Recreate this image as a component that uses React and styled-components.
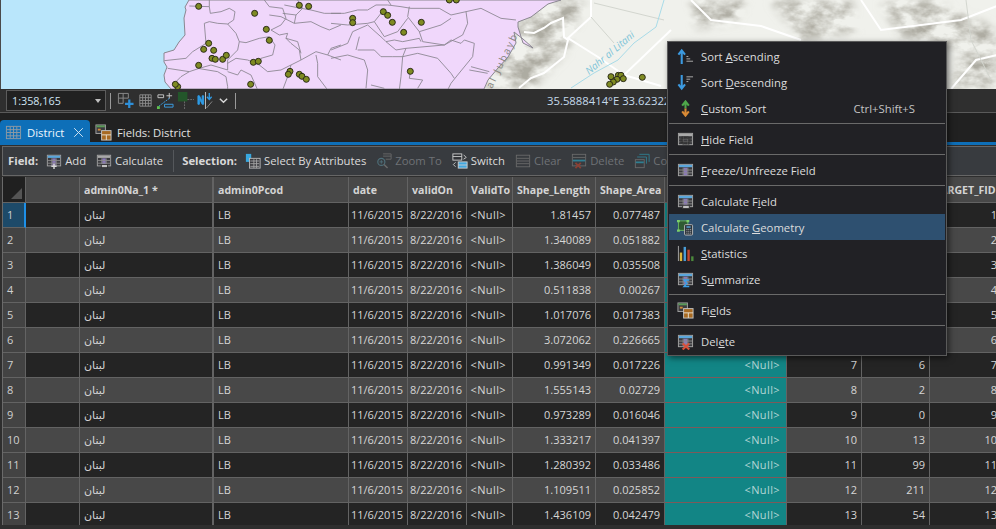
import styled, { createGlobalStyle } from "styled-components";

const FONT = `"Open Sans", "DejaVu Sans", sans-serif`;
const NULL_TEXT = "<Null>";

const GlobalStyle = createGlobalStyle`
  html, body {
    margin: 0;
    padding: 0;
    background: #2e2e2e;
    overflow: hidden;
  }
  * { box-sizing: border-box; }
`;

const COLUMNS = "23px 54px 134px 135px 59px 59px 46px 83px 69px 122px 75px 68px 72px";
const HEADERS = ["", "", "admin0Na_1 *", "admin0Pcod", "date", "validOn", "ValidTo", "Shape_Length", "Shape_Area", "", "", "", "TARGET_FID"];
const LENGTHS = ["1.81457", "1.340089", "1.386049", "0.511838", "1.017076", "3.072062", "0.991349", "1.555143", "0.973289", "1.333217", "1.280392", "1.109511", "1.436109"];
const AREAS = ["0.077487", "0.051882", "0.035508", "0.00267", "0.017383", "0.226665", "0.017226", "0.02729", "0.016046", "0.041397", "0.033486", "0.025852", "0.042479"];
const COUNTS = ["", "", "", "", "", "", "6", "2", "0", "13", "99", "211", "54"];

/* map drawing, coords are those of the 3x crops */
const WEST_LINES = [
  "M205 18L265 20 268 40 300 35 325 25 342 35 338 60 320 72 290 70 265 65 250 70 255 130 215 155 195 175 130 182",
  "M265 0L265 20",
  "M320 72L345 100 355 125 350 150 320 180 320 210 270 195 235 205 205 215 140 205",
  "M355 125L375 128 415 115 445 110 462 135 455 165 420 175 415 195 380 180 345 175 320 190",
  "M205 215L180 230 165 245",
  "M230 205L290 215 315 230 320 260 320 276",
  "M320 215L350 225 360 210 390 225 410 270",
  "M415 195L440 215 480 210 510 195 540 180 585 155 620 165 660 180",
  "M540 180L535 150 510 130 495 115 500 100 475 105 450 90 480 75 495 55 485 25 445 20 430 0",
  "M445 45L480 50 520 70 525 45 485 40",
  "M520 70L570 65 600 80 625 90 660 75",
  "M495 115L530 125 540 160",
  "M510 195L500 230 485 270",
  "M585 165L590 190 590 230 620 270",
  "M490 15L540 25 570 30 610 40 660 40",
  "M530 0L545 25 525 45",
  "M620 165L630 145 660 135",
];
const EAST_LINES = [
  "M0 40L40 40 80 30 110 30 135 15 170 15 210 20 240 25 325 25 360 45 405 35 450 25 510 55 555 60",
  "M170 0L180 15",
  "M235 20L230 50 265 95 330 75 360 55",
  "M130 65L160 110 200 95 230 55",
  "M0 70L50 75 110 70 130 65 150 40",
  "M0 150L50 130 65 95 110 75",
  "M110 75L155 115 165 125 190 120 215 125 265 115 270 125",
  "M265 95L275 125 340 135 395 105 410 70 405 35",
  "M165 125L195 150 225 145 340 135 360 120 390 130 400 120 430 130 425 170 380 225",
  "M225 145L215 170 210 230 205 270",
  "M215 170L260 160 320 175 360 220 370 235",
  "M80 150L130 150 150 170 185 170 215 170",
  "M0 175L50 165 100 180 110 210 105 265",
  "M85 110L75 150",
  "M420 200L475 215M415 210L470 220",
  "M380 225L360 250 350 270",
  "M238 215L235 235 275 240 260 265",
  "M120 255L160 265",
];
const WEST_POINTS = [[233,19],[401,40],[436,88],[445,121],[263,130],[248,148],[278,151],[273,175],[283,178],[305,178],[316,166],[233,196],[397,187],[412,184],[507,214],[502,223],[535,223],[543,229],[556,238],[170,260],[163,253],[389,253],[535,16],[563,19]];
const EAST_POINTS = [[65,55],[65,68],[157,35],[170,46],[184,67],[218,97],[271,67],[238,214],[355,0],[376,0],[934,232],[840,230],[862,226],[870,226],[877,236],[858,238],[847,246],[836,253]];

const MapDrawing = () => (
  <MapSvg viewBox="0 0 996 89" width="996" height="89">
    <defs>
      <filter id="relief" x="-10%" y="-30%" width="120%" height="160%">
        <feGaussianBlur in="SourceAlpha" stdDeviation="5" result="shape" />
        <feTurbulence type="fractalNoise" baseFrequency="0.045 0.07" numOctaves="4" seed="7" />
        <feColorMatrix values="0 0 0 0 0.42  0 0 0 0 0.41  0 0 0 0 0.36  2.6 0 0 0 -0.85" result="noise" />
        <feComposite in="noise" in2="shape" operator="in" />
      </filter>
    </defs>
    <rect width="996" height="89" fill="#f0f1ec" />
    <rect width="300" height="89" fill="#b9e6fb" />
    <g filter="url(#relief)" fill="#000">
      <path d="M530 0L585 0 572 30 566 50 530 89 480 89 510 40Z" />
      <path d="M690 0L745 0 735 22 695 28Z" />
      <path d="M770 0L850 0 855 30 800 40Z" />
      <path d="M880 4L930 0 996 30 996 89 950 89 960 50 900 36Z" />
    </g>
    <g fill="none" stroke="#fff" strokeWidth="2">
      <path d="M523 32L533 33 543 28 550 23 562 18 563 37 567 40 563 57 543 73 530 78 518 88" />
      <path d="M590 0L590 17 567 38 597 57 623 75 670 30" />
      <path d="M623 75L660 86" />
      <path d="M690 0L710 20 760 26 800 40M860 0L880 30 960 20 996 6M950 89L975 60 996 55" />
    </g>
    <g fill="none" stroke="#d3d6cf" strokeWidth="1">
      <path d="M590 17L613 43M593 3L663 20" />
      <path d="M965 0L970 40 990 80" />
    </g>
    <path d="M663 0L655 27 633 43 617 60 593 73 570 88" fill="none" stroke="#a8dbe8" strokeWidth="1" />
    <path d="M188 0L184 7 185 10 183 18 184 35 178 42 173 50 163 53 163 62 166 67 163 75 164 82 170 89 483 89 487 80 497 68 507 57 515 43 513 32 522 39 532 48 522 43 517 27 517 22 530 17 547 4 560 0Z" fill="#f0d7fb" stroke="#8a8790" strokeWidth="1" />
    <g transform="translate(120 0) scale(0.3333)" fill="none" stroke="#85828c" strokeWidth="2.5">
      {WEST_LINES.map((d) => <path key={d} d={d} />)}
    </g>
    <g transform="translate(330 0) scale(0.3333)" fill="none" stroke="#85828c" strokeWidth="2.5">
      {EAST_LINES.map((d) => <path key={d} d={d} />)}
    </g>
    <MapLabel x="0" y="0" transform="translate(491 89) rotate(-64)" fill="#85857e" letterSpacing="2">al Jubayb</MapLabel>
    <MapLabel x="0" y="0" transform="translate(588 75) rotate(-40)" fill="#7ec4d8" fontStyle="italic">Nahr al Litani</MapLabel>
    <g fill="#7f8b22" stroke="#2b2b18" strokeWidth="3">
      <g transform="translate(120 0) scale(0.3333)">
        {WEST_POINTS.map(([x, y]) => <circle key={`${x}-${y}`} cx={x} cy={y} r="9" />)}
      </g>
      <g transform="translate(330 0) scale(0.3333)">
        {EAST_POINTS.map(([x, y]) => <circle key={`${x}-${y}`} cx={x} cy={y} r="9" />)}
      </g>
    </g>
  </MapSvg>
);

/* small glyphs */
const TableGlyph = ({ head = "#a9a9a9", body = "#8a8a8a", accent, children }) => (
  <Glyph viewBox="0 0 18 18">
    <rect x="1.5" y="2.5" width="15" height="12" fill="#3b3b3f" stroke="#a5a5a5" />
    {accent && <rect x="7" y="6" width="4" height="8" fill={accent} />}
    <rect x="2" y="3" width="14" height="2.5" fill={head} />
    <path d="M2 8.5H16M2 11.5H16M6.5 6V14M11.5 6V14" stroke={body} />
    {children}
  </Glyph>
);

const SortAscIcon = () => (
  <Glyph viewBox="0 0 18 18">
    <path d="M5 17V4M1.5 7L5 2.5 8.5 7" fill="none" stroke="#3c9ae0" strokeWidth="2.2" />
    <path d="M10 9H12M10 11.5H14M10 14H17" stroke="#b0b0b0" />
  </Glyph>
);
const SortDescIcon = () => (
  <Glyph viewBox="0 0 18 18">
    <path d="M5 1V14M1.5 11L5 15.5 8.5 11" fill="none" stroke="#3c9ae0" strokeWidth="2.2" />
    <path d="M10 3H17M10 5.5H14M10 8H12" stroke="#b0b0b0" />
  </Glyph>
);
const CustomSortIcon = () => (
  <Glyph viewBox="0 0 18 18">
    <path d="M9 9V3M5.5 6L9 1.5 12.5 6" fill="none" stroke="#4ea84a" strokeWidth="2.2" />
    <path d="M9 9V15M5.5 12L9 16.5 12.5 12" fill="none" stroke="#d98a35" strokeWidth="2.2" />
  </Glyph>
);
const GeometryIcon = () => (
  <Glyph viewBox="0 0 18 18">
    <rect x="1.5" y="2" width="10" height="10" fill="#2f5a33" stroke="#68b85e" />
    <path d="M0 1H3V3.5H0ZM10 1H13V3.5H10ZM0 11H3V13.5H0Z" fill="#7ccf6a" />
    <rect x="8" y="6" width="8.5" height="11" rx="1" fill="#2a3138" stroke="#b8b8b8" />
    <path d="M10 8.5H14.5" stroke="#58a8dc" strokeWidth="1.5" />
    <path d="M10 11H11M12 11H13M14 11H15M10 13H11M12 13H13M14 13H15M10 15H11M12 15H13M14 15H15" stroke="#c8c8c8" />
  </Glyph>
);
const StatsIcon = () => (
  <Glyph viewBox="0 0 18 18">
    <path d="M1.5 1V17" stroke="#a8a8a8" />
    <rect x="3" y="8" width="2.5" height="9" fill="#e0b838" />
    <rect x="7" y="2" width="2.5" height="15" fill="#4a9ed8" />
    <rect x="11" y="5" width="2.5" height="12" fill="#c8492e" />
    <rect x="15" y="12" width="2.5" height="5" fill="#4c8a3c" />
  </Glyph>
);
const FieldsIcon = () => (
  <Glyph viewBox="0 0 18 18">
    <rect x="1" y="1" width="10" height="9" fill="#3b3b3f" stroke="#a5a5a5" />
    <rect x="1.5" y="1.5" width="9" height="2" fill="#5a9a58" />
    <rect x="3" y="5" width="3" height="2" fill="#d08a3a" />
    <rect x="7" y="7" width="10" height="10" fill="#a86a22" stroke="#c4c4c4" />
    <path d="M7 11.5H17M12 11.5V17" stroke="#e8e0d0" />
  </Glyph>
);
const RedCross = () => <path d="M6 11L13 17.5M13 11L6 17.5" stroke="#d8503a" strokeWidth="2.2" />;
const PlusMark = ({ color = "#3c9ae0" }) => <path d="M9 12V18M6 15H12" stroke={color} strokeWidth="1.6" />;
const Calc = () => <rect x="6" y="13" width="7" height="3.5" fill="#c0c0c0" stroke="#303030" />;
const Sigma = () => <path d="M13 9.5H7.5L10.5 13 7.5 16.5H13" fill="none" stroke="#3ca0e8" strokeWidth="1.6" />;
const DottedPatch = () => <rect x="5" y="7" width="8" height="6" fill="none" stroke="#2a2a2a" strokeWidth="3" strokeDasharray="1 1" />;

const SelectIcon = () => (
  <Glyph viewBox="0 0 18 18">
    <rect x="1" y="1" width="6" height="9" fill="#38a8e0" />
    <rect x="5" y="6" width="12" height="11" fill="#3b3b3f" stroke="#bdbdbd" />
    <path d="M6 9H16M6 12H16M6 15H16M10 7V17M13 7V17" stroke="#a5a5a5" />
  </Glyph>
);
const ZoomIcon = () => (
  <Glyph viewBox="0 0 18 18">
    <circle cx="6" cy="10" r="4" fill="none" stroke="#4e6f7a" strokeWidth="1.3" />
    <path d="M4 10H8M6 8V12" stroke="#4e6f7a" />
    <path d="M9 13L13 17" stroke="#6a6a6a" strokeWidth="1.6" />
    <path d="M8 1H17V7H11M8 3.5H17" fill="none" stroke="#6a6a6a" />
  </Glyph>
);
const SwitchIcon = () => (
  <Glyph viewBox="0 0 18 18">
    <rect x="1" y="1" width="10" height="7" fill="#303236" stroke="#d0d0d0" />
    <path d="M1 4H11" stroke="#d0d0d0" />
    <rect x="7" y="10" width="10" height="7" fill="#42a8e0" stroke="#d0d0d0" />
    <path d="M7 13.5H17" stroke="#d0d0d0" />
    <path d="M13 2L16 5 13 7M4 10.5L1.5 13 4 15.5" fill="none" stroke="#d0d0d0" />
  </Glyph>
);
const ClearIcon = () => (
  <Glyph viewBox="0 0 18 18">
    <rect x="1.5" y="2.5" width="15" height="13" fill="none" stroke="#6a6a6a" />
    <path d="M2 6H16M2 9H16M2 12H16" stroke="#6a6a6a" />
  </Glyph>
);
const DeleteRowsIcon = () => (
  <Glyph viewBox="0 0 18 18">
    <rect x="1.5" y="1.5" width="15" height="13" fill="none" stroke="#6a6a6a" />
    <path d="M2 5H16" stroke="#6a6a6a" />
    <path d="M2 8.5H16" stroke="#2f7f92" strokeWidth="2" />
    <path d="M5 11L11 17M11 11L5 17" stroke="#8a4034" strokeWidth="2" />
  </Glyph>
);
const CopyIcon = () => (
  <Glyph viewBox="0 0 18 18">
    <path d="M6 1.5H17V10" fill="none" stroke="#2f7f92" />
    <path d="M3.5 4.5H14V12" fill="none" stroke="#2f7f92" />
    <rect x="1.5" y="7.5" width="10" height="9" fill="none" stroke="#6a6a6a" />
    <path d="M2 10.5H11" stroke="#2f7f92" strokeWidth="2" />
  </Glyph>
);
const CloseMark = () => (
  <Glyph viewBox="0 0 18 18">
    <path d="M3 3L15 15M15 3L3 15" stroke="#d8e8f4" strokeWidth="1.3" />
  </Glyph>
);
const BigGrid = () => (
  <Glyph viewBox="0 0 18 18">
    <rect x="1.5" y="2.5" width="15" height="13" fill="none" stroke="#8f9aa3" />
    <path d="M2 6H16M2 9H16M2 12.5H16M5.5 3V15M9 3V15M12.5 3V15" stroke="#8f9aa3" />
  </Glyph>
);

const StatusIcons = () => (
  <>
    <Glyph viewBox="0 0 18 18">
      <path d="M1.5 1.5H12V6.5H6.5V12H1.5ZM6.5 1.5V6.5H1.5" fill="none" stroke="#8c8c8c" />
      <path d="M13 8V17M8.5 12.5H17.5" stroke="#2e8fd8" strokeWidth="2.4" />
    </Glyph>
    <Glyph viewBox="0 0 18 18">
      <path d="M3 3H15V15H3ZM3 6H15M3 9H15M3 12H15M6 3V15M9 3V15M12 3V15" fill="none" stroke="#8c8c8c" />
    </Glyph>
    <Glyph viewBox="0 0 18 18">
      <path d="M1 3H7V6H1ZM13 1V7M10 4H16" fill="none" stroke="#c8c8c8" />
      <path d="M2 15L14 6" stroke="#3ca0e8" strokeDasharray="2 1" />
      <path d="M8 13H17V16H8Z" fill="none" stroke="#3ca0e8" />
      <rect x="0" y="15" width="3" height="3" fill="#60c050" />
    </Glyph>
    <Glyph viewBox="0 0 18 18">
      <rect x="1" y="0" width="10" height="10" fill="#23562a" />
      <path d="M11 8H18M8 10V18" stroke="#6e6e6e" strokeDasharray="2 1" />
    </Glyph>
    <Glyph viewBox="0 0 18 18">
      <path d="M1 13V4H2.5L5.5 10V4H7V13H5.5L2.5 7V13Z" fill="#2e9be6" stroke="#2e9be6" />
      <path d="M9 0V18" stroke="#c0c0c0" />
      <path d="M13 1V7M10.5 5L13 8 15.5 5" fill="none" stroke="#2e9be6" strokeWidth="1.4" />
      <path d="M10 17L16 10" stroke="#8a8a8a" />
    </Glyph>
    <Chevron viewBox="0 0 12 12">
      <path d="M2 4L6 8 10 4" fill="none" stroke="#d8d8d8" strokeWidth="1.5" />
    </Chevron>
  </>
);

const MenuEntry = ({ icon, children, shortcut, $active }) => (
  <MenuItem $active={$active}>
    <MenuIcon>{icon}</MenuIcon>
    <MenuLabel>{children}</MenuLabel>
    {shortcut && <Shortcut>{shortcut}</Shortcut>}
  </MenuItem>
);

const FieldMenu = () => (
  <Menu>
    <MenuEntry icon={<SortAscIcon />}>Sort <u>A</u>scending</MenuEntry>
    <MenuEntry icon={<SortDescIcon />}>Sort <u>D</u>escending</MenuEntry>
    <MenuEntry icon={<CustomSortIcon />} shortcut="Ctrl+Shift+S"><u>C</u>ustom Sort</MenuEntry>
    <MenuLine />
    <MenuEntry icon={<TableGlyph body="#6a6a6a"><DottedPatch /></TableGlyph>}><u>H</u>ide Field</MenuEntry>
    <MenuLine />
    <MenuEntry icon={<TableGlyph head="#5aa6dc" accent="#8a78b8" />}><u>F</u>reeze/Unfreeze Field</MenuEntry>
    <MenuLine />
    <MenuEntry icon={<TableGlyph head="#5aa6dc" accent="#8a78b8"><Calc /></TableGlyph>}>Calculate F<u>i</u>eld</MenuEntry>
    <MenuEntry icon={<GeometryIcon />} $active>Calculate <u>G</u>eometry</MenuEntry>
    <MenuEntry icon={<StatsIcon />}><u>S</u>tatistics</MenuEntry>
    <MenuEntry icon={<TableGlyph head="#5aa6dc" accent="#8a78b8"><Sigma /></TableGlyph>}>S<u>u</u>mmarize</MenuEntry>
    <MenuLine />
    <MenuEntry icon={<FieldsIcon />}>Fi<u>e</u>lds</MenuEntry>
    <MenuLine />
    <MenuEntry icon={<TableGlyph head="#5aa6dc" accent="#8a78b8"><RedCross /></TableGlyph>}>Del<u>e</u>te</MenuEntry>
  </Menu>
);

const DataRow = ({ index }) => {
  const n = index + 1;
  const even = n % 2 === 0;
  return (
    <>
      <RowNumber $current={n === 1}>{n}</RowNumber>
      <Cell $even={even} />
      <Cell $even={even} $thick lang="ar" dir="ltr">لبنان</Cell>
      <Cell $even={even}>LB</Cell>
      <Cell $even={even} $right>11/6/2015</Cell>
      <Cell $even={even} $right>8/22/2016</Cell>
      <NullCell $even={even}>{NULL_TEXT}</NullCell>
      <Cell $even={even} $right>{LENGTHS[index]}</Cell>
      <Cell $even={even} $right>{AREAS[index]}</Cell>
      <NullCell $teal>{n > 6 ? NULL_TEXT : ""}</NullCell>
      <Cell $even={even} $right>{n > 6 ? n : ""}</Cell>
      <Cell $even={even} $right>{COUNTS[index]}</Cell>
      <Cell $even={even} $right>{n}</Cell>
    </>
  );
};

export default function App() {
  return (
    <Page>
      <GlobalStyle />
      <MapView>
        <MapDrawing />
      </MapView>
      <StatusBar>
        <ScaleBox>
          1:358,165
          <Caret />
        </ScaleBox>
        <StatusDivider />
        <StatusIcons />
        <StatusDivider $end />
        <Coordinates>35.5888414°E 33.6232223°N</Coordinates>
      </StatusBar>
      <TabStrip>
        <ActiveTab>
          <BigGrid />
          District
          <CloseMark />
        </ActiveTab>
        <Tab>
          <FieldsIcon />
          Fields: District
        </Tab>
      </TabStrip>
      <Toolbar>
        <ToolGroupLabel>Field:</ToolGroupLabel>
        <ToolButton><TableGlyph head="#5aa6dc" accent="#8a78b8"><PlusMark color="#d8d8d8" /></TableGlyph>Add</ToolButton>
        <ToolButton><TableGlyph head="#a9a9a9" accent="#8a78b8"><Calc /></TableGlyph>Calculate</ToolButton>
        <ToolDivider />
        <ToolGroupLabel>Selection:</ToolGroupLabel>
        <ToolButton><SelectIcon />Select By Attributes</ToolButton>
        <ToolButton $disabled><ZoomIcon />Zoom To</ToolButton>
        <ToolButton><SwitchIcon />Switch</ToolButton>
        <ToolButton $disabled><ClearIcon />Clear</ToolButton>
        <ToolButton $disabled><DeleteRowsIcon />Delete</ToolButton>
        <ToolButton $disabled><CopyIcon />Copy</ToolButton>
      </Toolbar>
      <TableFrame>
        <Table>
          <CornerCell />
          {HEADERS.slice(1).map((name, i) => (
            <HeaderCell key={i} $thick={i === 1}>{name}</HeaderCell>
          ))}
          {LENGTHS.map((_, i) => <DataRow key={i} index={i} />)}
        </Table>
      </TableFrame>
      <FieldMenu />
    </Page>
  );
}

const Page = styled.div`
  position: relative;
  width: 996px;
  height: 529px;
  overflow: hidden;
  background: #2e2e2e;
  font-family: ${FONT};
  font-size: 11px;
  color: #d8d8d8;
`;

const MapView = styled.div`
  height: 89px;
  border-left: 1px solid #4a4a4a;
  overflow: hidden;
`;

const MapSvg = styled.svg`
  display: block;
`;

const MapLabel = styled.text`
  font-family: ${FONT};
  font-size: 10px;
  stroke: none;
`;

const Glyph = styled.svg`
  display: block;
  flex: none;
  width: 17px;
  height: 17px;
`;

const Chevron = styled.svg`
  display: block;
  flex: none;
  width: 11px;
  height: 11px;
  margin-left: 1px;
`;

const StatusBar = styled.div`
  display: flex;
  align-items: center;
  gap: 3px;
  height: 24px;
  padding-left: 6px;
  background: #2f2f2f;
  border-bottom: 1px solid #5a5a5a;
`;

const ScaleBox = styled.div`
  display: flex;
  align-items: center;
  justify-content: space-between;
  width: 100px;
  height: 21px;
  padding: 0 4px 0 5px;
  background: #212121;
  border: 1px solid #5c5c5c;
  color: #cfe3f2;
  font-size: 10.8px;
`;

const Caret = styled.span`
  width: 0;
  height: 0;
  border-left: 3px solid transparent;
  border-right: 3px solid transparent;
  border-top: 4px solid #c0c0c0;
`;

const StatusDivider = styled.span`
  width: 1px;
  height: 16px;
  margin: ${(p) => (p.$end ? "0 0 0 3px" : "0 3px 0 1px")};
  background: #9a9a9a;
`;

const Coordinates = styled.span`
  width: 119px;
  margin-left: 308px;
  white-space: nowrap;
  overflow: hidden;
  color: #c4d9ea;
  font-size: 11.3px;
`;

const TabStrip = styled.div`
  display: flex;
  align-items: flex-end;
  height: 32px;
  padding-top: 6px;
  background: #212121;
  border-bottom: 3px solid #0e6fb8;
`;

const ActiveTab = styled.div`
  display: flex;
  align-items: center;
  gap: 5px;
  width: 90px;
  height: 22px;
  padding: 2px 5px 0;
  background: #0e6fb8;
  border-radius: 4px 4px 0 0;
  color: #eef6fc;
  font-size: 11.3px;

  svg:last-child {
    width: 13px;
    height: 13px;
    margin-left: 3px;
  }
`;

const Tab = styled.div`
  display: flex;
  align-items: center;
  gap: 5px;
  height: 22px;
  padding: 2px 5px 0;
  color: #e2e2e2;
  font-size: 11.3px;
`;

const Toolbar = styled.div`
  display: flex;
  align-items: center;
  gap: 10px;
  height: 30px;
  margin: 1px 0 1px 2px;
  padding: 0 0 1px 5px;
  background: #383b3f;
  border: 1px solid #666;
  border-right: none;
  font-size: 11.3px;
  white-space: nowrap;
  overflow: hidden;

  svg {
    width: 16px;
    height: 16px;
  }
`;

const ToolGroupLabel = styled.span`
  margin-right: -2px;
  font-weight: 700;
  color: #d8d8d8;
`;

const ToolButton = styled.span`
  display: flex;
  align-items: center;
  gap: 3px;
  color: ${(p) => (p.$disabled ? "#6f7276" : "#dcdcdc")};
`;

const ToolDivider = styled.span`
  width: 1px;
  height: 22px;
  margin-right: -2px;
  background: #55585c;
`;

const TableFrame = styled.div`
  height: 348px;
  margin-left: 2px;
  border-left: 1px solid #6a6a6a;
  overflow: hidden;
`;

const Table = styled.div`
  display: grid;
  grid-template-columns: ${COLUMNS};
  grid-template-rows: 26px;
  grid-auto-rows: 25px;
  width: max-content;
`;

const HeaderCell = styled.div`
  display: flex;
  align-items: center;
  padding-left: 4px;
  background: #484848;
  border-right: ${(p) => (p.$thick ? "2px" : "1px")} solid #636363;
  border-bottom: 1px solid #636363;
  font-size: 10.6px;
  font-weight: 700;
  color: #d4d4d4;
  white-space: nowrap;
  overflow: hidden;
`;

const CornerCell = styled(HeaderCell)`
  position: relative;
  background: #202020;

  &::after {
    content: "";
    position: absolute;
    right: 3px;
    bottom: 3px;
    border-left: 11px solid transparent;
    border-bottom: 11px solid #555;
  }
`;

const RowNumber = styled.div`
  display: flex;
  align-items: center;
  padding: 0 0 2px 4px;
  background: ${(p) => (p.$current ? "#1d4a69" : "#434343")};
  border-right: ${(p) => (p.$current ? "2px solid #1e90e8" : "1px solid #636363")};
  border-bottom: 1px solid #636363;
  color: #d0d0d0;
`;

const Cell = styled.div`
  display: flex;
  align-items: center;
  justify-content: ${(p) => (p.$right ? "flex-end" : "flex-start")};
  padding: 0 4px 2px;
  background: ${(p) => (p.$even ? "#484848" : "#242424")};
  border-right: ${(p) => (p.$thick ? "2px" : "1px")} solid #636363;
  border-bottom: 1px solid #636363;
  color: #d6d6d6;
  white-space: nowrap;
  overflow: hidden;
`;

const NullCell = styled(Cell)`
  justify-content: flex-end;
  padding-right: 6px;
  letter-spacing: 0.4px;
  background: ${(p) => (p.$teal ? "#128585" : p.$even ? "#484848" : "#242424")};
  border-bottom-color: ${(p) => (p.$teal ? "#7d5a5a" : "#636363")};
  color: ${(p) => (p.$teal ? "#b4d6d6" : "#d6d6d6")};
`;

const Menu = styled.div`
  position: absolute;
  left: 667px;
  top: 41px;
  width: 280px;
  height: 315px;
  padding: 1px 1px 0;
  background: #212125;
  border: 1px solid #5a5a5a;
  box-shadow: 2px 2px 6px rgba(0, 0, 0, 0.55);
  font-size: 11.3px;
  color: #dcdcdc;
`;

const MenuItem = styled.div`
  display: flex;
  align-items: center;
  height: 26px;
  background: ${(p) => (p.$active ? "#2e5070" : "transparent")};
`;

const MenuIcon = styled.span`
  display: flex;
  justify-content: center;
  flex: none;
  width: 32px;
`;

const MenuLabel = styled.span`
  white-space: nowrap;
`;

const Shortcut = styled.span`
  margin-left: auto;
  margin-right: 30px;
  color: #c4c4c4;
`;

const MenuLine = styled.div`
  height: 1px;
  margin: 2px 0;
  background: #6a6a6a;
`;
